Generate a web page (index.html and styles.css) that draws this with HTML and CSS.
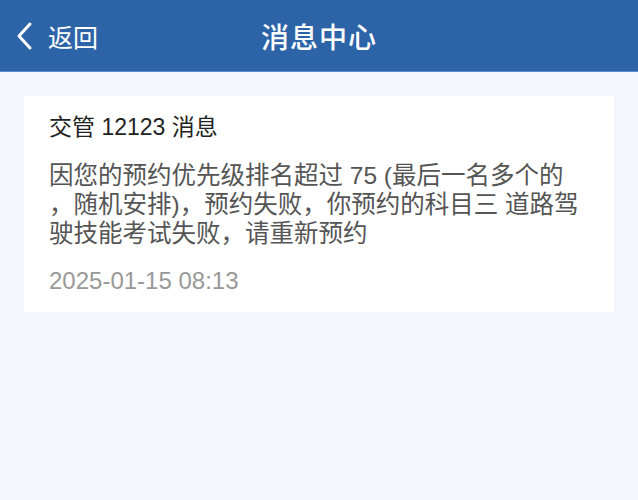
FILE: index.html
```html
<!DOCTYPE html>
<html lang="zh-CN">
<head>
<meta charset="utf-8">
<title>消息中心</title>
<link rel="stylesheet" href="styles.css">
</head>
<body>
<header class="navbar">
  <div class="back">
    <svg class="chev" width="20" height="30" viewBox="0 0 20 30"><path d="M16 3 L5 15 L16 27" fill="none" stroke="#fff" stroke-width="3" stroke-linecap="round" stroke-linejoin="round"/></svg>
    <span class="back-text">返回</span>
  </div>
  <h1 class="title">消息中心</h1>
</header>
<main class="content">
  <section class="card">
    <div class="card-title">交管 12123 消息</div>
    <p class="card-body">因您的预约优先级排名超过 75 (最后一名多个的<br>，随机安排)，预约失败，你预约的科目三 道路驾<br>驶技能考试失败，请重新预约</p>
    <div class="card-time">2025-01-15 08:13</div>
  </section>
</main>
</body>
</html>
```
FILE: styles.css
```css
* { box-sizing: border-box; }
html, body { margin: 0; padding: 0; }
body {
  width: 638px;
  height: 500px;
  background: #f3f6fa;
  font-family: "Liberation Sans", "Noto Sans CJK SC", sans-serif;
  overflow: hidden;
}
.navbar {
  position: relative;
  height: 72px;
  background: #2d64a8;
  border-bottom: 1px solid #5b8cc8;
  display: flex;
  align-items: center;
  justify-content: center;
}
.back {
  position: absolute;
  left: 14px;
  top: 0;
  height: 72px;
  display: flex;
  align-items: center;
  gap: 14px;
  color: #fff;
}
.chev { display: block; }
.back-text { font-family: "Noto Sans CJK SC", sans-serif; font-size: 25px; line-height: 1; }
.title {
  margin: 0;
  color: #fff;
  font-family: "Noto Sans CJK SC", sans-serif;
  font-size: 28px;
  font-weight: 500;
  letter-spacing: 1px;
}
.content { padding: 24px 24px 0 24px; }
.card {
  background: #fff;
  padding: 16px 25px 16px 25px;
  height: 216px;
}
.card-title {
  font-size: 23px;
  line-height: 30px;
  color: #222;
}
.card-body {
  margin: 19px 0 0 0;
  font-size: 24.5px;
  line-height: 29px;
  color: #555;
}
.card-time {
  margin-top: 19px;
  font-size: 24px;
  line-height: 28px;
  color: #999;
}
```
